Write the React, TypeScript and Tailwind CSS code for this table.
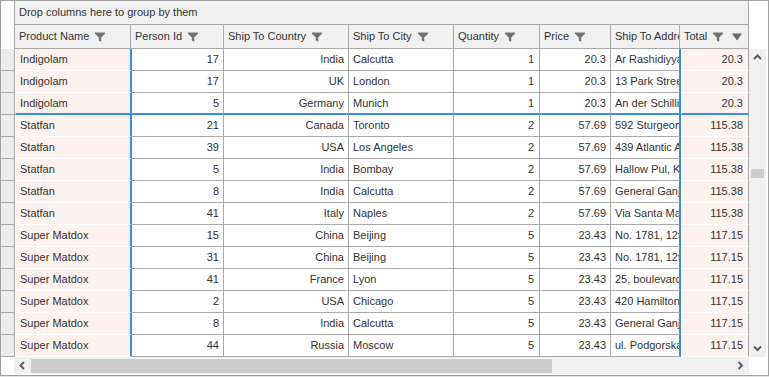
import React from 'react';

type Row = {
  product: string;
  person: number;
  country: string;
  city: string;
  qty: number;
  price: string;
  address: string;
  total: string;
};

const rows: Row[] = [
  { product: 'Indigolam', person: 17, country: 'India', city: 'Calcutta', qty: 1, price: '20.3', address: 'Ar Rashidiyyah', total: '20.3' },
  { product: 'Indigolam', person: 17, country: 'UK', city: 'London', qty: 1, price: '20.3', address: '13 Park Street', total: '20.3' },
  { product: 'Indigolam', person: 5, country: 'Germany', city: 'Munich', qty: 1, price: '20.3', address: 'An der Schillingbrücke', total: '20.3' },
  { product: 'Statfan', person: 21, country: 'Canada', city: 'Toronto', qty: 2, price: '57.69', address: '592 Sturgeon Rd', total: '115.38' },
  { product: 'Statfan', person: 39, country: 'USA', city: 'Los Angeles', qty: 2, price: '57.69', address: '439 Atlantic Ave', total: '115.38' },
  { product: 'Statfan', person: 5, country: 'India', city: 'Bombay', qty: 2, price: '57.69', address: 'Hallow Pul, Kurla', total: '115.38' },
  { product: 'Statfan', person: 8, country: 'India', city: 'Calcutta', qty: 2, price: '57.69', address: 'General Ganj', total: '115.38' },
  { product: 'Statfan', person: 41, country: 'Italy', city: 'Naples', qty: 2, price: '57.69', address: 'Via Santa Maria', total: '115.38' },
  { product: 'Super Matdox', person: 15, country: 'China', city: 'Beijing', qty: 5, price: '23.43', address: 'No. 1781, 12th St', total: '117.15' },
  { product: 'Super Matdox', person: 31, country: 'China', city: 'Beijing', qty: 5, price: '23.43', address: 'No. 1781, 12th St', total: '117.15' },
  { product: 'Super Matdox', person: 41, country: 'France', city: 'Lyon', qty: 5, price: '23.43', address: '25, boulevard Rue', total: '117.15' },
  { product: 'Super Matdox', person: 2, country: 'USA', city: 'Chicago', qty: 5, price: '23.43', address: '420 Hamilton Ave', total: '117.15' },
  { product: 'Super Matdox', person: 8, country: 'India', city: 'Calcutta', qty: 5, price: '23.43', address: 'General Ganj', total: '117.15' },
  { product: 'Super Matdox', person: 44, country: 'Russia', city: 'Moscow', qty: 5, price: '23.43', address: 'ul. Podgorskaya', total: '117.15' },
];

const Funnel = () => (
  <svg width="10" height="10" viewBox="0 0 10 10" className="shrink-0 ml-[6px]">
    <path d="M0 0.5H10V1.7L6.2 5.4V9.8L3.8 8.6V5.4L0 1.7Z" fill="#727272" />
  </svg>
);

const HeadCell = ({ label, last }: { label: string; last?: boolean }) => (
  <div className="flex items-center pl-[4px] border-r border-[#a9a9a9] overflow-hidden whitespace-nowrap">
    <span>{label}</span>
    {label !== 'Ship To Address' && <Funnel />}
    {last && (
      <svg width="10" height="8" viewBox="0 0 10 8" className="ml-[9px] shrink-0">
        <path d="M0 0.5H10L5 7.5Z" fill="#6a6a6a" />
      </svg>
    )}
  </div>
);

const Chevron = ({ dir }: { dir: 'up' | 'down' | 'left' | 'right' }) => {
  const d = {
    up: 'M1 5L4.5 1.5L8 5',
    down: 'M1 1.5L4.5 5L8 1.5',
    left: 'M5 1L1.5 4.5L5 8',
    right: 'M1.5 1L5 4.5L1.5 8',
  }[dir];
  const vertical = dir === 'up' || dir === 'down';
  return (
    <svg width={vertical ? 9 : 7} height={vertical ? 7 : 9} viewBox={vertical ? '0 0 9 7' : '0 0 7 9'}>
      <path d={d} stroke="#606060" strokeWidth="2" fill="none" />
    </svg>
  );
};

const dataCols = 'grid-cols-[14px_117px_92px_125px_105px_86px_71px_70px_68px]';

export default function App() {
  return (
    <div className="w-[769px] h-[377px] bg-white font-['Liberation_Sans',Arial,sans-serif] text-[11px] text-[#333]">
      <div className="h-[376px] border border-[#a0a0a0] flex flex-col">
        {/* group panel */}
        <div className="flex h-[24px]">
          <div className="w-[14px] border-r border-[#a9a9a9]" />
          <div className="w-[734px] bg-[#f0f0f0] border-r border-b border-[#a9a9a9] flex items-center pl-[4px] pb-[1px]">
            Drop columns here to group by them
          </div>
        </div>

        {/* header */}
        <div className="flex h-[24px]">
          <div className="grid grid-cols-[14px_116px_93px_125px_105px_86px_71px_69px_69px] w-[748px]">
            <div className="border-r border-[#a9a9a9]" />
            <div className="col-span-8 grid grid-cols-[116px_93px_125px_105px_86px_71px_69px_69px] bg-[#f0f0f0] border-b border-[#a9a9a9]">
              <HeadCell label="Product Name" />
              <HeadCell label="Person Id" />
              <HeadCell label="Ship To Country" />
              <HeadCell label="Ship To City" />
              <HeadCell label="Quantity" />
              <HeadCell label="Price" />
              <HeadCell label="Ship To Address" />
              <HeadCell label="Total" last />
            </div>
          </div>
        </div>

        {/* body */}
        <div className="flex h-[308px]">
          <div className="w-[748px] flex flex-col">
            {rows.map((r, i) => {
              const split = i === 2;
              const line = split ? 'border-b-2 border-b-[#3a8ee6]' : 'border-b border-b-[#a9a9a9]';
              const plain = `flex items-center overflow-hidden whitespace-nowrap border-r border-r-[#a9a9a9] ${line}`;
              const pink = split
                ? 'border-b-2 border-b-[#3a8ee6]'
                : 'border-b border-b-white';
              return (
                <div key={i} className={`grid ${dataCols} h-[22px]`}>
                  <div className="bg-[#ebebeb] border-r border-b border-[#a9a9a9]" />
                  <div className={`flex items-center pl-[4px] bg-[#fdf2ed] border-l border-l-white border-r-2 border-r-[#3a8ee6] ${pink}`}>
                    {r.product}
                  </div>
                  <div className={`${plain} justify-end pr-[4px]`}>{r.person}</div>
                  <div className={`${plain} justify-end pr-[4px]`}>{r.country}</div>
                  <div className={`${plain} pl-[4px]`}>{r.city}</div>
                  <div className={`${plain} justify-end pr-[5px]`}>{r.qty}</div>
                  <div className={`${plain} justify-end pr-[4px]`}>{r.price}</div>
                  <div className={`flex items-center overflow-hidden whitespace-nowrap pl-[4px] border-r-2 border-r-[#3a8ee6] ${line}`}>
                    <span className="overflow-hidden">{r.address}</span>
                  </div>
                  <div className={`flex items-center justify-end pr-[5px] bg-[#fdf2ed] border-l border-l-white border-r border-r-[#a9a9a9] ${pink}`}>
                    {r.total}
                  </div>
                </div>
              );
            })}
          </div>
          {/* vertical scrollbar */}
          <div className="w-[17px] bg-[#f0f0f0] flex flex-col items-center">
            <div className="h-[17px] flex items-center justify-center">
              <Chevron dir="up" />
            </div>
            <div className="mt-[103px] w-[13px] h-[9px] bg-[#cdcdcd]" />
            <div className="flex-1" />
            <div className="h-[17px] flex items-center justify-center">
              <Chevron dir="down" />
            </div>
          </div>
        </div>

        {/* horizontal scrollbar */}
        <div className="flex h-[17px]">
          <div className="w-[13px]" />
          <div className="w-[735px] bg-[#f0f0f0] flex items-center">
            <div className="w-[17px] flex items-center justify-center">
              <Chevron dir="left" />
            </div>
            <div className="w-[521px] h-[14px] bg-[#cdcdcd]" />
            <div className="flex-1" />
            <div className="w-[17px] flex items-center justify-center">
              <Chevron dir="right" />
            </div>
          </div>
        </div>
      </div>
      <div className="h-[1px] bg-[#e3e3e3]" />
    </div>
  );
}
